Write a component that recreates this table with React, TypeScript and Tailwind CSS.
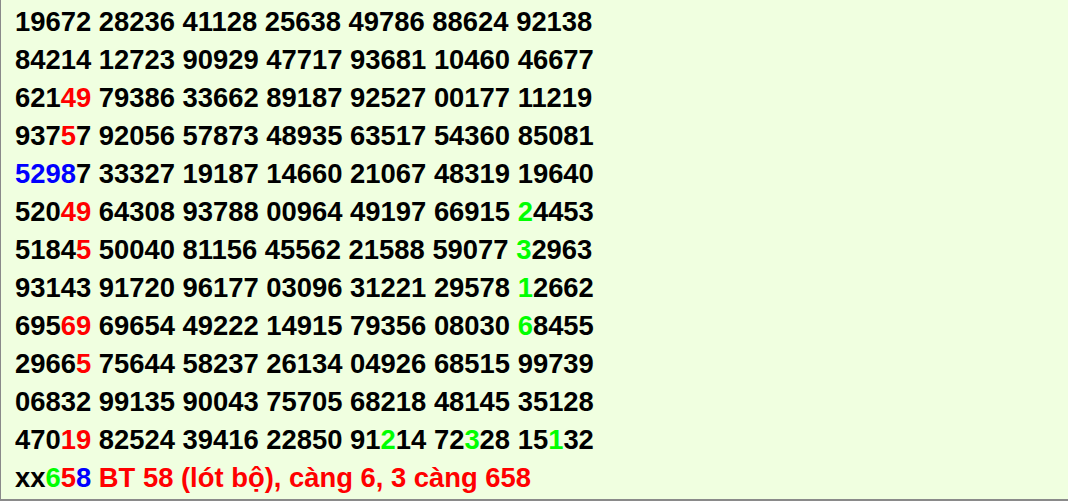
import React from "react";

type Seg = [string, string?];

const R = "text-[#ff0000]";
const G = "text-[#00ff00]";
const B = "text-[#0000ff]";

const rows: Seg[][] = [
  [["19672 28236 41128 25638 49786 88624 92138"]],
  [["84214 12723 90929 47717 93681 10460 46677"]],
  [["621"], ["49", R], [" 79386 33662 89187 92527 00177 11219"]],
  [["937"], ["5", R], ["7 92056 57873 48935 63517 54360 85081"]],
  [["5298", B], ["7 33327 19187 14660 21067 48319 19640"]],
  [["520"], ["49", R], [" 64308 93788 00964 49197 66915 "], ["2", G], ["4453"]],
  [["5184"], ["5", R], [" 50040 81156 45562 21588 59077 "], ["3", G], ["2963"]],
  [["93143 91720 96177 03096 31221 29578 "], ["1", G], ["2662"]],
  [["695"], ["69", R], [" 69654 49222 14915 79356 08030 "], ["6", G], ["8455"]],
  [["2966"], ["5", R], [" 75644 58237 26134 04926 68515 99739"]],
  [["06832 99135 90043 75705 68218 48145 35128"]],
  [
    ["470"],
    ["19", R],
    [" 82524 39416 22850 91"],
    ["2", G],
    ["14 72"],
    ["3", G],
    ["28 15"],
    ["1", G],
    ["32"],
  ],
  [["xx"], ["6", G], ["5", R], ["8", B], [" BT 58 (lót bộ), càng 6, 3 càng 658", R]],
];

export default function App() {
  return (
    <div className="w-[1068px] h-[502px] bg-white">
      <div className="h-[501px] bg-[#f0ffe0] border-l border-b-2 border-[#8a8a8a] pl-[14px] pt-[3px] font-['Liberation_Sans',Arial,sans-serif] font-bold text-[27.4px] leading-[38px] text-black whitespace-pre">
        {rows.map((row, i) => (
          <div key={i}>
            {row.map(([t, c], j) => (
              <span key={j} className={c}>
                {t}
              </span>
            ))}
          </div>
        ))}
      </div>
    </div>
  );
}
